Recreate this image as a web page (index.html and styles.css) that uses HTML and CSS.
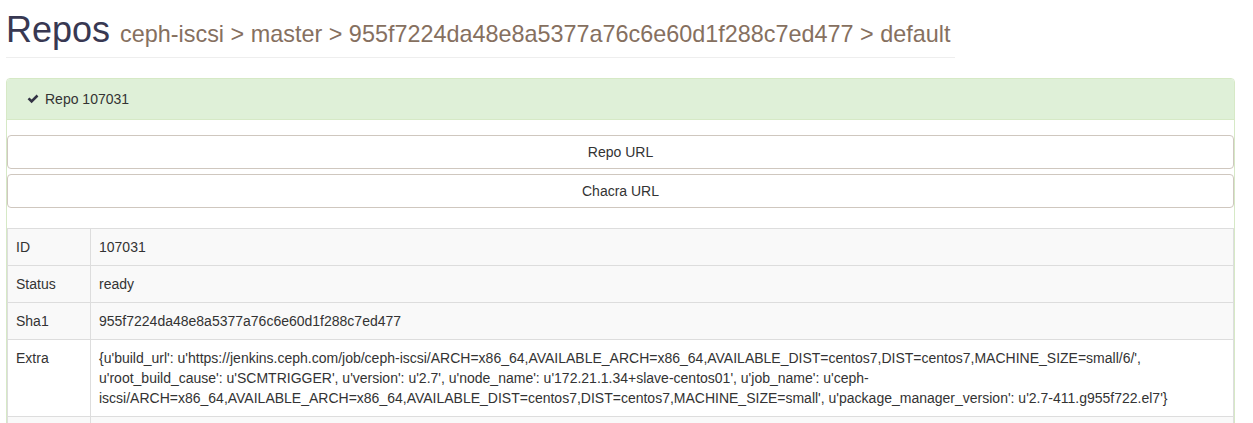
FILE: index.html
```html
<!DOCTYPE html>
<html lang="en">
<head>
<meta charset="utf-8">
<title>Repos</title>
<link rel="stylesheet" href="styles.css">
</head>
<body>
<div class="page">
  <div class="page-header">
    <h1>Repos <small>ceph-iscsi &gt; master &gt; 955f7224da48e8a5377a76c6e60d1f288c7ed477 &gt; default</small></h1>
  </div>

  <div class="panel">
    <div class="panel-heading">
      <svg class="check" viewBox="0 0 12 10" width="12" height="10" aria-hidden="true">
        <path d="M0.6 5.2 L2.4 3.4 L4.6 5.6 L9.6 0.6 L11.4 2.4 L4.6 9.2 Z" fill="currentColor"/>
      </svg>
      <span>Repo 107031</span>
    </div>
    <div class="panel-body">
      <a class="btn" href="#">Repo URL</a>
      <a class="btn" href="#">Chacra URL</a>

      <table class="details">
        <tbody>
          <tr class="shaded">
            <td class="key">ID</td>
            <td>107031</td>
          </tr>
          <tr class="shaded">
            <td class="key">Status</td>
            <td>ready</td>
          </tr>
          <tr class="shaded">
            <td class="key">Sha1</td>
            <td>955f7224da48e8a5377a76c6e60d1f288c7ed477</td>
          </tr>
          <tr>
            <td class="key">Extra</td>
            <td class="extra">{u'build_url': u'https://jenkins.ceph.com/job/ceph-iscsi/ARCH=x86_64,AVAILABLE_ARCH=x86_64,AVAILABLE_DIST=centos7,DIST=centos7,MACHINE_SIZE=small/6/',<br>u'root_build_cause': u'SCMTRIGGER', u'version': u'2.7', u'node_name': u'172.21.1.34+slave-centos01', u'job_name': u'ceph-<br>iscsi/ARCH=x86_64,AVAILABLE_ARCH=x86_64,AVAILABLE_DIST=centos7,DIST=centos7,MACHINE_SIZE=small', u'package_manager_version': u'2.7-411.g955f722.el7'}</td>
          </tr>
          <tr class="shaded">
            <td class="key">&nbsp;</td>
            <td>&nbsp;</td>
          </tr>
        </tbody>
      </table>
    </div>
  </div>
</div>
</body>
</html>
```

FILE: styles.css
```css
html, body {
  margin: 0;
  padding: 0;
  background: #ffffff;
  overflow: hidden;
}

body {
  font-family: "Liberation Sans", Arial, sans-serif;
  font-size: 14px;
  line-height: 20px;
  color: #333333;
}

.page {
  padding: 0 18px 0 6px;
}

.page-header {
  width: 949px;
  padding-bottom: 7px;
  border-bottom: 1px solid #eeeeee;
  margin: 10px 0 20px;
}

.page-header h1 {
  margin: 0;
  font-size: 36px;
  font-weight: 500;
  line-height: 39.6px;
  color: #383852;
  white-space: nowrap;
}

.page-header small {
  font-size: 65%;
  font-weight: 400;
  line-height: 1;
  color: #86705f;
}

.panel {
  border: 1px solid #d6e9c6;
  border-radius: 4px;
  background: #ffffff;
}

.panel-heading {
  display: flex;
  align-items: center;
  padding: 10px 15px;
  background: #dff0d8;
  border-bottom: 1px solid #d6e9c6;
  border-radius: 3px 3px 0 0;
  color: #333333;
}

.check {
  margin-left: 5px;
  margin-right: 6px;
  color: #333345;
  flex: none;
}

.panel-body {
  padding: 15px 0 0;
}

.btn {
  display: block;
  height: 34px;
  box-sizing: border-box;
  padding: 6px 12px;
  border: 1px solid #cfc7bf;
  border-radius: 4px;
  background: #ffffff;
  color: #333333;
  text-align: center;
  text-decoration: none;
  font-size: 14px;
  line-height: 20px;
}

.btn + .btn {
  margin-top: 5px;
}

.details {
  width: 100%;
  margin-top: 20px;
  border-collapse: collapse;
  border: 1px solid #dddddd;
}

.details td {
  padding: 8px;
  border: 1px solid #dddddd;
  vertical-align: top;
  line-height: 20px;
  text-align: left;
}

.details td.key {
  width: 66px;
}

.details tr.shaded td {
  background: #f9f9f9;
}

.details td.extra {
  white-space: nowrap;
}
```
